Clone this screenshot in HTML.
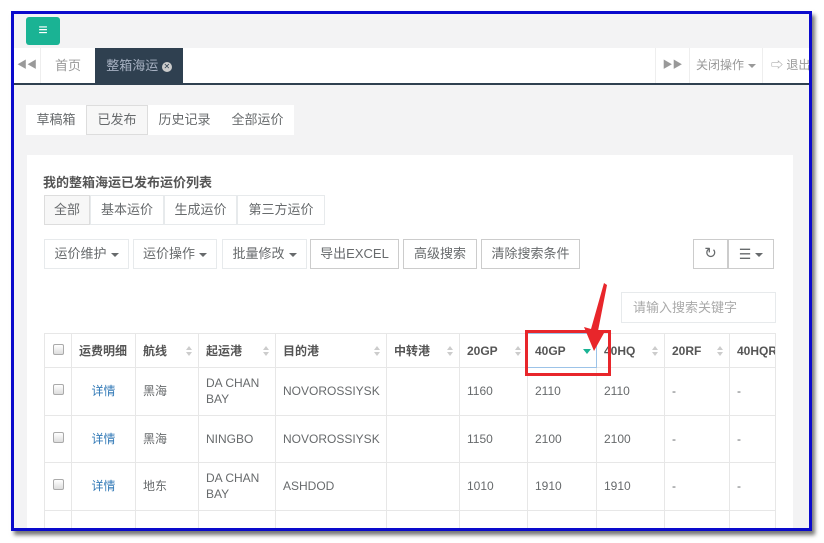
<!DOCTYPE html>
<html><head><meta charset="utf-8"><style>
*{box-sizing:border-box;margin:0;padding:0}
body{width:824px;height:543px;background:#fff;position:relative;overflow:hidden;font-family:"Liberation Sans","Noto Sans CJK SC",sans-serif;font-size:13px;color:#676a6c}
.a{position:absolute}
.frame{left:11px;top:11px;width:801px;height:520px;border:3px solid #0a0acc;background:#f3f3f4;box-shadow:3px 4px 4px #777;overflow:hidden}
.btn{position:absolute;border:1px solid #e7eaec;background:#fff;height:30px;line-height:28px;text-align:center;color:#676a6c;font-size:13px}
.caret{display:inline-block;border-left:4px solid transparent;border-right:4px solid transparent;border-top:4px solid #676a6c;vertical-align:middle;margin-left:4px}
table{border-collapse:collapse;position:absolute;left:30px;top:319px;table-layout:fixed;width:731px}
td,th{border:1px solid #e7e7e7;padding:0 7px;font-size:12px;text-align:left;color:#676a6c;line-height:16px;overflow:hidden}
th{height:34px;font-weight:bold;color:#555;position:relative;white-space:nowrap}
td{height:47.5px}
.s:after{content:"";position:absolute;right:6px;top:12px;width:0;height:0;border-left:3px solid transparent;border-right:3px solid transparent;border-bottom:4px solid #ccc}
.s:before{content:"";position:absolute;right:6px;top:18px;width:0;height:0;border-left:3px solid transparent;border-right:3px solid transparent;border-top:4px solid #ccc}
.cb{display:inline-block;width:11px;height:11px;border:1px solid #aaa;border-radius:2px;background:linear-gradient(#fff,#ddd)}
.lk{color:#337ab7;text-align:center}
</style></head><body>
<div class="a frame">
 <div class="a" style="left:12px;top:3px;width:34px;height:28px;background:#1ab394;border-radius:3px;color:#fff;text-align:center;line-height:28px;font-size:16px;font-weight:bold">≡</div>
 <div class="a" style="left:0;top:34px;width:800px;height:37px;background:#fff;border-bottom:2px solid #2f4050"></div>
 <div class="a" style="left:0;top:34px;width:27px;height:35px;background:#fff;border-right:1px solid #eee;line-height:35px;text-align:center;color:#999;font-size:10px">◀◀</div>
 <div class="a" style="left:27px;top:34px;width:54px;height:35px;line-height:35px;text-align:center;color:#999">首页</div>
 <div class="a" style="left:81px;top:34px;width:88px;height:37px;background:#2f4050;line-height:35px;text-align:center;color:#a7b1c2">整箱海运 <span style="display:inline-block;width:10px;height:10px;border-radius:50%;background:#ccc;color:#2f4050;font-size:8px;line-height:10px;vertical-align:middle">✕</span></div>
 <div class="a" style="left:641px;top:34px;width:34px;height:35px;border-left:1px solid #eee;line-height:35px;text-align:center;color:#999;font-size:10px">▶▶</div>
 <div class="a" style="left:675px;top:34px;width:73px;height:35px;border-left:1px solid #eee;line-height:35px;text-align:center;color:#999;font-size:12px">关闭操作<span class="caret" style="border-top-color:#999"></span></div>
 <div class="a" style="left:748px;top:34px;width:60px;height:35px;border-left:1px solid #eee;line-height:35px;padding-left:8px;color:#999;font-size:12px">⇨ 退出</div>
 <div class="btn" style="left:12px;top:91px;width:60px;border-color:#fff">草稿箱</div>
 <div class="btn" style="left:72px;top:91px;width:62px;background:#f7f7f7;border-color:#ddd">已发布</div>
 <div class="btn" style="left:134px;top:91px;width:73px;border-color:#fff">历史记录</div>
 <div class="btn" style="left:207px;top:91px;width:73px;border-color:#fff">全部运价</div>
 <div class="a" style="left:13px;top:141px;width:766px;height:380px;background:#fff"></div>
 <div class="a" style="left:29px;top:158px;font-weight:bold;color:#555;font-size:13px">我的整箱海运已发布运价列表</div>
 <div class="btn" style="left:30px;top:181px;width:46px;background:#f7f7f7;border-color:#ddd">全部</div>
 <div class="btn" style="left:76px;top:181px;width:74px">基本运价</div>
 <div class="btn" style="left:150px;top:181px;width:73px">生成运价</div>
 <div class="btn" style="left:223px;top:181px;width:88px">第三方运价</div>
 <div class="btn" style="left:30px;top:225px;width:85px">运价维护<span class="caret"></span></div>
 <div class="btn" style="left:119px;top:225px;width:84px">运价操作<span class="caret"></span></div>
 <div class="btn" style="left:208px;top:225px;width:85px">批量修改<span class="caret"></span></div>
 <div class="btn" style="left:296px;top:225px;width:89px;border-color:#ccc">导出EXCEL</div>
 <div class="btn" style="left:389px;top:225px;width:74px;border-color:#ccc">高级搜索</div>
 <div class="btn" style="left:467px;top:225px;width:99px;border-color:#ccc">清除搜索条件</div>
 <div class="btn" style="left:679px;top:225px;width:35px;border-color:#ccc;font-size:15px">↻</div>
 <div class="btn" style="left:714px;top:225px;width:46px;border-color:#ccc;font-size:14px">☰<span class="caret"></span></div>
 <div class="btn" style="left:607px;top:278px;width:155px;text-align:left;padding-left:11px;color:#aaa;height:31px;line-height:29px">请输入搜索关键字</div>
 <table>
  <colgroup><col style="width:27px"><col style="width:64px"><col style="width:63px"><col style="width:77px"><col style="width:111px"><col style="width:73px"><col style="width:68px"><col style="width:69px"><col style="width:68px"><col style="width:65px"><col style="width:46px"></colgroup>
  <tr><th style="text-align:center;padding:0"><span class="cb"></span></th><th>运费明细</th><th class="s">航线</th><th class="s">起运港</th><th class="s">目的港</th><th class="s">中转港</th><th class="s">20GP</th><th style="border:1px solid #9cc3e8">40GP<span style="position:absolute;right:5px;top:15px;border-left:4px solid transparent;border-right:4px solid transparent;border-top:5px solid #1ab394"></span></th><th class="s">40HQ</th><th class="s">20RF</th><th style="padding-right:0">40HQR</th></tr>
  <tr><td style="text-align:center;padding:0"><span class="cb"></span></td><td class="lk">详情</td><td>黑海</td><td>DA CHAN BAY</td><td>NOVOROSSIYSK</td><td></td><td>1160</td><td>2110</td><td>2110</td><td>-</td><td>-</td></tr>
  <tr><td style="text-align:center;padding:0"><span class="cb"></span></td><td class="lk">详情</td><td>黑海</td><td>NINGBO</td><td>NOVOROSSIYSK</td><td></td><td>1150</td><td>2100</td><td>2100</td><td>-</td><td>-</td></tr>
  <tr><td style="text-align:center;padding:0"><span class="cb"></span></td><td class="lk">详情</td><td>地东</td><td>DA CHAN BAY</td><td>ASHDOD</td><td></td><td>1010</td><td>1910</td><td>1910</td><td>-</td><td>-</td></tr>
  <tr><td></td><td></td><td></td><td></td><td></td><td></td><td></td><td></td><td></td><td></td><td></td></tr>
 </table>
 <div class="a" style="left:511px;top:316px;width:86px;height:46px;border:3px solid #e8262b"></div>
 <svg class="a" style="left:560px;top:265px" width="40" height="80"><polygon points="30,4 33,6 24,52 30,54 20,72 10,48 17,50" fill="#e8262b"/></svg>
</div>
</body></html>
